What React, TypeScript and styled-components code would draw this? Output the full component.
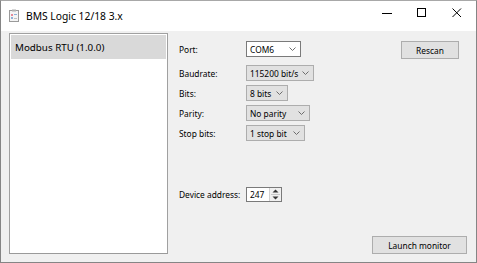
import React from 'react';
import styled, { createGlobalStyle } from 'styled-components';

const GlobalStyle = createGlobalStyle`
  body {
    margin: 0;
    background: #ffffff;
    font-family: 'Noto Sans', 'Liberation Sans', sans-serif;
  }
`;

const ports = [
  { label: 'Port:', value: 'COM6', width: 55, active: true },
  { label: 'Baudrate:', value: '115200 bit/s', width: 68 },
  { label: 'Bits:', value: '8 bits', width: 42 },
  { label: 'Parity:', value: 'No parity', width: 64 },
  { label: 'Stop bits:', value: '1 stop bit', width: 59 },
];

const Chevron = () => (
  <svg width="7" height="4" viewBox="0 0 7 4">
    <path d="M0.5 0.5 L3.5 3.5 L6.5 0.5" fill="none" stroke="#6d6d6d" strokeWidth="1" />
  </svg>
);

const AppIcon = () => (
  <svg width="10" height="13" viewBox="0 0 10 13">
    <rect x="0.5" y="1.5" width="9" height="11" fill="#f4f4f4" stroke="#9a9a9a" />
    <rect x="3" y="0.5" width="4" height="2" fill="#b0b0b0" />
    <rect x="2" y="5" width="2" height="2" fill="#e58a9a" />
    <rect x="5" y="5" width="3" height="1" fill="#8fb0d8" />
    <rect x="2" y="8" width="2" height="2" fill="#8fb0d8" />
    <rect x="5" y="9" width="3" height="1" fill="#c0c0c0" />
  </svg>
);

const App = () => {
  return (
    <>
      <GlobalStyle />
      <Window>
        <TitleBar>
          <IconSlot>
            <AppIcon />
          </IconSlot>
          <Title>BMS Logic 12/18 3.x</Title>
          <Controls>
            <ControlButton>
              <svg width="10" height="10" viewBox="0 0 10 10">
                <path d="M0 5.5 H10" stroke="#000" strokeWidth="1" />
              </svg>
            </ControlButton>
            <ControlButton>
              <svg width="10" height="10" viewBox="0 0 10 10">
                <rect x="0.5" y="0.5" width="8" height="8" fill="none" stroke="#000" />
              </svg>
            </ControlButton>
            <ControlButton>
              <svg width="10" height="10" viewBox="0 0 10 10">
                <path d="M0.5 0.5 L9 9 M9 0.5 L0.5 9" stroke="#000" strokeWidth="1" />
              </svg>
            </ControlButton>
          </Controls>
        </TitleBar>

        <Body>
          <ListBox>
            <ListItem $selected>Modbus RTU (1.0.0)</ListItem>
          </ListBox>

          <Panel>
            <Top>
              <Form>
                {ports.map((p, i) => (
                  <FormRow key={p.label} $first={i === 0}>
                    <Label>{p.label}</Label>
                    <Combo $active={p.active} style={{ width: p.width }}>
                      <span>{p.value}</span>
                      <Chevron />
                    </Combo>
                  </FormRow>
                ))}
              </Form>
              <Button $width={58}>Rescan</Button>
            </Top>

            <AddressRow>
              <Label>Device address:</Label>
              <SpinBox>
                <span>247</span>
                <Spinner>
                  <svg width="7" height="4" viewBox="0 0 7 4">
                    <path d="M0.5 3.5 L3.5 0.5 L6.5 3.5 Z" fill="#333" />
                  </svg>
                  <SpinSep />
                  <svg width="7" height="4" viewBox="0 0 7 4">
                    <path d="M0.5 0.5 L3.5 3.5 L6.5 0.5 Z" fill="#333" />
                  </svg>
                </Spinner>
              </SpinBox>
            </AddressRow>

            <Footer>
              <Button $width={95}>Launch monitor</Button>
            </Footer>
          </Panel>
        </Body>
      </Window>
    </>
  );
};

export default App;

const Window = styled.div`
  width: 477px;
  height: 263px;
  box-sizing: border-box;
  border: 1px solid #858585;
  border-top-color: #a8a8a8;
  background: #f0f0f0;
  display: flex;
  flex-direction: column;
`;

const TitleBar = styled.div`
  height: 30px;
  flex-shrink: 0;
  background: #ffffff;
  display: flex;
  align-items: center;
  padding-left: 8px;
`;

const IconSlot = styled.div`
  display: flex;
  align-items: center;
  width: 12px;
  margin-top: -1px;
`;

const Title = styled.span`
  margin-left: 5px;
  font-size: 10.3px;
  color: #000;
`;

const Controls = styled.div`
  margin-left: auto;
  margin-right: 2px;
  display: flex;
  height: 100%;
`;

const ControlButton = styled.div`
  width: 35px;
  height: 100%;
  display: flex;
  align-items: center;
  justify-content: center;
  margin-top: -3px;
`;

const Body = styled.div`
  flex: 1;
  display: flex;
  padding: 2px 9px 8px 8px;
  min-height: 0;
`;

const ListBox = styled.div`
  width: 159px;
  box-sizing: border-box;
  background: #ffffff;
  border: 1px solid #a0a0a0;
  border-bottom-color: #9a9a9a;
  padding: 1px;
`;

const ListItem = styled.div<{ $selected?: boolean }>`
  height: 24px;
  display: flex;
  align-items: center;
  padding-left: 4px;
  font-size: 9.8px;
  color: #000;
  background: ${(p) => (p.$selected ? '#d9d9d9' : 'transparent')};
`;

const Panel = styled.div`
  flex: 1;
  display: flex;
  flex-direction: column;
  padding: 8px 0 0 11px;
`;

const Top = styled.div`
  display: flex;
  align-items: flex-start;
  justify-content: space-between;
`;

const Form = styled.div`
  display: flex;
  flex-direction: column;
  gap: 4px;
`;

const FormRow = styled.div<{ $first?: boolean }>`
  display: flex;
  align-items: center;
  height: 16px;
  margin-bottom: ${(p) => (p.$first ? '4px' : '0')};
`;

const Label = styled.span`
  width: 67px;
  font-size: 8.4px;
  color: #000;
`;

const Combo = styled.div<{ $active?: boolean }>`
  height: 16px;
  box-sizing: border-box;
  display: flex;
  align-items: center;
  justify-content: space-between;
  padding: 0 4px 0 3px;
  font-size: 8.4px;
  color: #000;
  background: ${(p) => (p.$active ? '#ffffff' : '#e1e1e1')};
  border: 1px solid ${(p) => (p.$active ? '#7a7a7a' : '#adadad')};
`;

const Button = styled.div<{ $width: number }>`
  width: ${(p) => p.$width}px;
  height: 18px;
  box-sizing: border-box;
  display: flex;
  align-items: center;
  justify-content: center;
  font-size: 8.4px;
  color: #000;
  background: #e1e1e1;
  border: 1px solid #adadad;
  margin-right: 8px;
`;

const AddressRow = styled.div`
  display: flex;
  align-items: center;
  height: 15px;
  margin-top: 46px;
`;

const SpinBox = styled.div`
  width: 36px;
  height: 15px;
  box-sizing: border-box;
  display: flex;
  align-items: center;
  justify-content: space-between;
  padding-left: 3px;
  font-size: 8.4px;
  background: #ffffff;
  border: 1px solid #7a7a7a;
`;

const Spinner = styled.div`
  width: 11px;
  height: 100%;
  display: flex;
  flex-direction: column;
  align-items: center;
  justify-content: center;
  gap: 1px;
  background: #f0f0f0;
  border-left: 1px solid #d0d0d0;
`;

const SpinSep = styled.div`
  width: 9px;
  height: 1px;
  background: #c8c8c8;
`;

const Footer = styled.div`
  margin-top: auto;
  display: flex;
  justify-content: flex-end;
  & > div {
    margin-right: 0;
  }
`;
